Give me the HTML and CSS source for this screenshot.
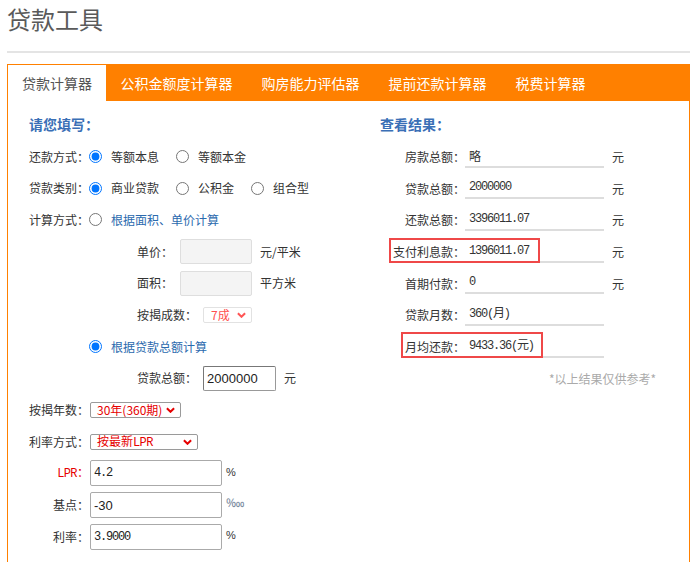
FILE: index.html
```html
<!DOCTYPE html>
<html lang="zh-CN">
<head>
<meta charset="utf-8">
<title>贷款工具</title>
<link rel="stylesheet" href="styles.css">
</head>
<body>
<div class="page">
  <h1 class="title">贷款工具</h1>
  <div class="rule"></div>
  <div class="panel">
    <ul class="tabs">
      <li class="tab active">贷款计算器</li>
      <li class="tab">公积金额度计算器</li>
      <li class="tab">购房能力评估器</li>
      <li class="tab">提前还款计算器</li>
      <li class="tab">税费计算器</li>
    </ul>
    <div class="content">
      <section class="form">
        <h2 class="heading">请您填写：</h2>
        <div class="row">
          <span class="label">还款方式：</span>
          <label class="opt"><input type="radio" name="way" checked><span>等额本息</span></label>
          <label class="opt"><input type="radio" name="way"><span>等额本金</span></label>
        </div>
        <div class="row">
          <span class="label">贷款类别：</span>
          <label class="opt"><input type="radio" name="kind" checked><span>商业贷款</span></label>
          <label class="opt"><input type="radio" name="kind"><span>公积金</span></label>
          <label class="opt"><input type="radio" name="kind"><span>组合型</span></label>
        </div>
        <div class="row">
          <span class="label">计算方式：</span>
          <label class="opt"><input type="radio" name="calc"><span class="link">根据面积、单价计算</span></label>
        </div>
        <div class="row sub">
          <span>单价：</span>
          <input class="box gray" type="text">
          <span class="unit">元/平米</span>
        </div>
        <div class="row sub">
          <span>面积：</span>
          <input class="box gray" type="text">
          <span class="unit">平方米</span>
        </div>
        <div class="row sub">
          <span>按揭成数：</span>
          <div class="select light s-ratio"><span>7成</span><svg viewBox="0 0 10 6"><path d="M1 1l4 4 4-4" fill="none" stroke="#f55" stroke-width="2.2"/></svg></div>
        </div>
        <div class="row indent">
          <label class="opt"><input type="radio" name="calc" checked><span class="link">根据贷款总额计算</span></label>
        </div>
        <div class="row sub">
          <span>贷款总额：</span>
          <input class="box total" type="text" value="2000000">
          <span class="unit">元</span>
        </div>
        <div class="row">
          <span class="label">按揭年数：</span>
          <div class="select s-years"><span>30年(360期)</span><svg viewBox="0 0 10 6"><path d="M1 1l4 4 4-4" fill="none" stroke="#e60000" stroke-width="2.2"/></svg></div>
        </div>
        <div class="row">
          <span class="label">利率方式：</span>
          <div class="select s-rate"><span>按最新<span class="serif">LPR</span></span><svg viewBox="0 0 10 6"><path d="M1 1l4 4 4-4" fill="none" stroke="#e60000" stroke-width="2.2"/></svg></div>
        </div>
        <div class="row">
          <span class="label red"><span class="serif">LPR</span>：</span>
          <input class="box wide mono" type="text" value="4.2">
          <span class="pct">%</span>
        </div>
        <div class="row">
          <span class="label">基点：</span>
          <input class="box wide arial" type="text" value="-30">
          <span class="pct bp">‱</span>
        </div>
        <div class="row">
          <span class="label">利率：</span>
          <input class="box wide mono" type="text" value="3.9000">
          <span class="pct">%</span>
        </div>
      </section>
      <section class="result">
        <h2 class="heading">查看结果：</h2>
        <div class="res-row">
          <span class="res-label">房款总额：</span>
          <span class="res-value">略</span>
          <span class="res-unit">元</span>
        </div>
        <div class="res-row">
          <span class="res-label">贷款总额：</span>
          <span class="res-value mono">2000000</span>
          <span class="res-unit">元</span>
        </div>
        <div class="res-row">
          <span class="res-label">还款总额：</span>
          <span class="res-value mono">3396011.07</span>
          <span class="res-unit">元</span>
        </div>
        <div class="res-row">
          <span class="res-label">支付利息款：</span>
          <span class="res-value mono">1396011.07</span>
          <span class="res-unit">元</span>
          <span class="mark mark-interest"></span>
        </div>
        <div class="res-row">
          <span class="res-label">首期付款：</span>
          <span class="res-value mono">0</span>
          <span class="res-unit">元</span>
        </div>
        <div class="res-row">
          <span class="res-label">贷款月数：</span>
          <span class="res-value mono">360(月)</span>
        </div>
        <div class="res-row">
          <span class="res-label">月均还款：</span>
          <span class="res-value mono">9433.36(元)</span>
          <span class="mark mark-monthly"></span>
        </div>
        <div class="res-row tip">*以上结果仅供参考*</div>
      </section>
    </div>
  </div>
</div>
</body>
</html>
```

FILE: styles.css
```css
* { box-sizing: border-box; }

body {
  margin: 0;
  font-family: "Noto Sans CJK SC", "Noto Sans", sans-serif;
  font-size: 12px;
  color: #333;
  background: #fff;
}

.page {
  width: 690px;
  padding-left: 7px;
}

.title {
  margin: 0;
  height: 38px;
  line-height: 38px;
  font-size: 24px;
  font-weight: normal;
  color: #5a5a5a;
}

.rule {
  margin-top: 13px;
  height: 2px;
  background: #e4e4e4;
}

.panel {
  margin-top: 11px;
  border: 1px solid #ff8000;
  border-bottom: none;
  min-height: 520px;
}

.tabs {
  display: flex;
  margin: 0;
  padding: 0;
  list-style: none;
  background: #ff8000;
  height: 36px;
}

.tab {
  padding: 0 14.5px;
  line-height: 36px;
  font-size: 14px;
  color: #fff;
  white-space: nowrap;
}

.tab.active {
  background: #fff;
  color: #555;
  padding: 0 14px;
}

.content {
  display: grid;
  grid-template-columns: 351px 1fr;
  padding: 8px 0 30px 21px;
}

.heading {
  margin: 0;
  height: 31.7px;
  line-height: 31.7px;
  font-size: 14px;
  font-weight: bold;
  color: #3a6fb6;
}

.row {
  display: flex;
  align-items: center;
  height: 31.7px;
  line-height: 16px;
  white-space: nowrap;
}

.label {
  width: 60px;
  flex: none;
  text-align: right;
}

.red { color: #e60000; }

.serif { font-family: "Liberation Mono", monospace; letter-spacing: -0.6px; }

.opt {
  display: flex;
  align-items: center;
  margin-right: 17px;
}

.opt input {
  margin: 0 9px 0 0;
  width: 13px;
  height: 13px;
}

.link { color: #2b6aae; }

.sub { padding-left: 108px; }
.indent { padding-left: 60px; }

.box {
  margin: 0 0 0 7px;
  height: 25px;
  padding: 0 3px;
  border: 1px solid #a9a9a9;
  border-radius: 2px;
  background: #fff;
  font-size: 13px;
  color: #222;
  outline: none;
}

.box.gray {
  width: 72px;
  background: #f4f4f4;
  border-color: #dedede;
}

.box.total {
  margin-left: 6px;
  width: 73px;
  font-family: "Liberation Sans", Arial, sans-serif;
  border-color: #999;
  border-top-color: #777;
  border-left-color: #777;
}

.unit { margin-left: 8px; }

.box.wide {
  margin-left: 1px;
  width: 132px;
  height: 26px;
  border-color: #aaa;
}

.mono {
  font-family: "Liberation Mono", monospace;
  font-size: 12px;
  letter-spacing: -1.2px;
}

.box.wide.mono { font-size: 12px; }

.arial { font-family: "Liberation Sans", Arial, sans-serif; }

.pct {
  margin-left: 4px;
  font-size: 11px;
  font-family: "Liberation Sans", sans-serif;
  color: #333;
  align-self: flex-start;
  margin-top: 6px;
}

.pct.bp { color: #7b8aa0; font-size: 12px; }

.select {
  display: flex;
  align-items: center;
  justify-content: space-between;
  height: 16px;
  border: 1px solid #9a9a9a;
  border-radius: 2px;
  color: #e60000;
  padding: 0 5px 0 6px;
  line-height: 14px;
  font-size: 12px;
}

.select svg { width: 9px; height: 6px; flex: none; }

.select.light {
  border-color: #e2e2e2;
  color: #ff5050;
  padding-left: 7px;
}

.s-ratio { width: 49px; margin-left: 6px; }
.s-years { width: 91px; margin-left: 1px; }
.s-rate { width: 108px; margin-left: 1px; }

.res-row {
  position: relative;
  display: flex;
  align-items: center;
  height: 31.7px;
  white-space: nowrap;
}

.res-label {
  width: 85px;
  flex: none;
  text-align: right;
}

.res-value {
  width: 139px;
  height: 22px;
  padding-left: 4px;
  border-bottom: 2px solid #ddd;
  line-height: 20px;
}

.res-unit { margin-left: 8px; }

.mark {
  position: absolute;
  border: 2px solid #ef4848;
}

.mark-interest { left: 9px; top: 2px; width: 151px; height: 25px; }
.mark-monthly { left: 21px; top: 1px; width: 142px; height: 26px; }

.tip {
  padding-left: 169px;
  color: #aaa;
}
```
